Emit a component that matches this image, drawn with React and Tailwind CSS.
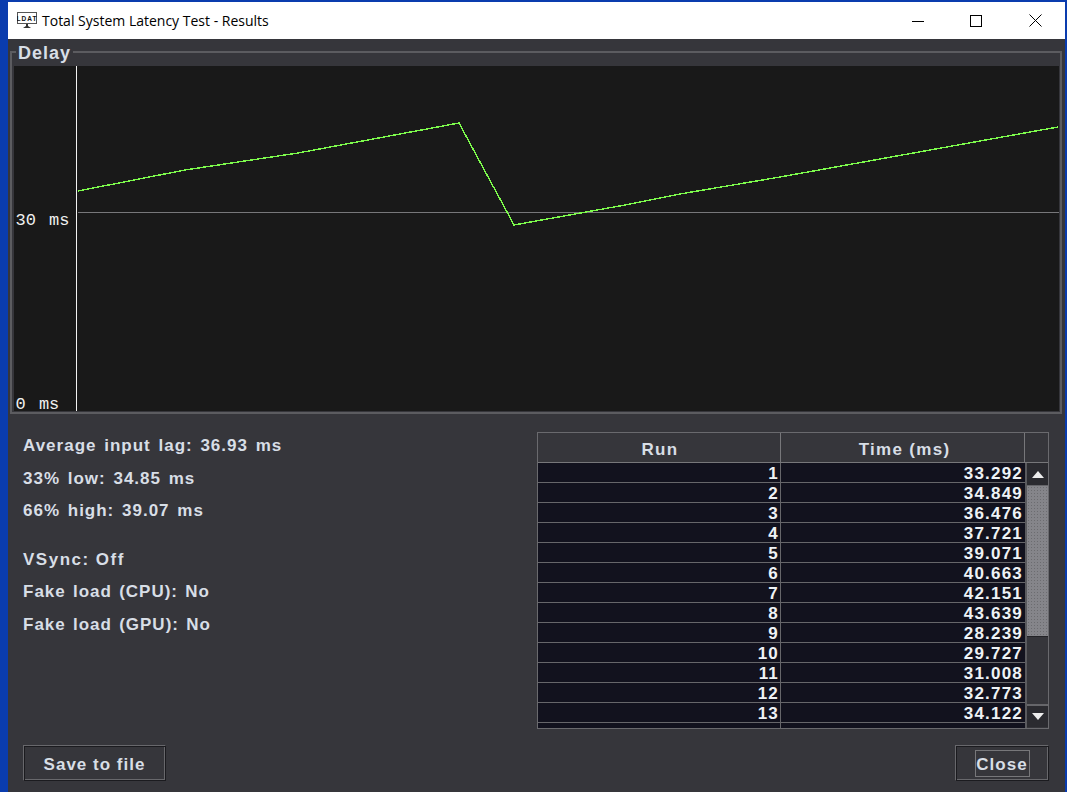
const rows = [
  [1, "33.292"],
  [2, "34.849"],
  [3, "36.476"],
  [4, "37.721"],
  [5, "39.071"],
  [6, "40.663"],
  [7, "42.151"],
  [8, "43.639"],
  [9, "28.239"],
  [10, "29.727"],
  [11, "31.008"],
  [12, "32.773"],
  [13, "34.122"],
];

const stats = ["Average input lag: 36.93 ms", "33% low: 34.85 ms", "66% high: 39.07 ms"];
const settings = [
  { text: "VSync: Off", cls: "tracking-[1.5px]" },
  { text: "Fake load (CPU): No", cls: "[word-spacing:1.5px]" },
  { text: "Fake load (GPU): No", cls: "[word-spacing:1.5px]" },
];

const bevel =
  "border border-t-[#68686c] border-l-[#68686c] border-r-[#1b1b1f] border-b-[#1b1b1f] shadow-[inset_1px_1px_0_#1b1b1f,inset_-1px_-1px_0_#68686c]";

function AppIcon() {
  return (
    <svg width="20" height="18" viewBox="0 0 20 18" className="shrink-0">
      <rect x="0.5" y="0.5" width="19" height="11" fill="#fff" stroke="#555" />
      <text x="10" y="8.5" textAnchor="middle" fontSize="6.5" fontWeight="700" fontFamily="Liberation Sans, sans-serif" fill="#111">
        LDAT
      </text>
      <path d="M9 12h2v2h-2zM6 16l3-2h2l3 2z" fill="#333" />
    </svg>
  );
}

function TitleBar() {
  return (
    <div className="flex h-[37px] items-center bg-white text-black">
      <div className="ml-[9px] mr-[5px] flex w-5">
        <AppIcon />
      </div>
      <span className="text-[14px] font-normal tracking-normal [font-family:'Open_Sans',sans-serif]">Total System Latency Test - Results</span>
      <div className="ml-auto flex h-full">
        <div className="flex w-[58px] items-center justify-center">
          <svg width="12" height="12" viewBox="0 0 12 12">
            <path d="M0 6.5h12" stroke="#000" />
          </svg>
        </div>
        <div className="flex w-[58px] items-center justify-center">
          <svg width="12" height="12" viewBox="0 0 12 12">
            <rect x="0.5" y="0.5" width="11" height="11" fill="none" stroke="#000" />
          </svg>
        </div>
        <div className="flex w-[60px] items-center justify-center">
          <svg width="13" height="13" viewBox="0 0 13 13">
            <path d="M0.5 0.5l12 12M12.5 0.5l-12 12" stroke="#000" />
          </svg>
        </div>
      </div>
    </div>
  );
}

function DelayChart() {
  const line = "64,125 171,104 284,87 445,57 500,159 611,139 666,128 766,111 1044,61";
  const label = { fontSize: 17, fontWeight: 400, letterSpacing: 0, wordSpacing: 3, fill: "#f0f0f0", fontFamily: "Liberation Mono, monospace" };
  return (
    <svg width="1045" height="345" viewBox="0 0 1045 345" className="block overflow-visible bg-[#191919]">
      <path d="M62.5 0v345" stroke="#f2f2f2" />
      <path d="M64 146.5h981" stroke="#77777a" />
      <polyline points={line} fill="none" stroke="#7dfb4c" strokeWidth="1.4" shapeRendering="crispEdges" />
      <text x="1.5" y="159" {...label}>30 ms</text>
      <text x="1.5" y="343" {...label}>0 ms</text>
    </svg>
  );
}

function ResultsTable() {
  return (
    <div className="flex h-[297px] w-[512px] flex-col overflow-hidden border border-[#6a6a6e]">
      <div className="flex h-[30px] shrink-0 border-b border-[#77777a] tracking-[1.3px] text-[#d8dee6]">
        <div className="flex w-[243px] items-center justify-center border-r border-[#77777a] pl-[2px] pt-[5px]">Run</div>
        <div className="flex w-[244px] items-center justify-center border-r border-[#77777a] pl-[4px] pt-[5px]">Time (ms)</div>
        <div className="flex-1" />
      </div>
      <div className="flex min-h-0 flex-1">
        <div className="w-[487px] overflow-hidden bg-[#12121e] tracking-[1.2px]">
          {rows.map(([run, time]) => (
            <div key={run} className="flex h-5 border-b border-[#66666a] leading-[22px] text-[#eef2f6]">
              <div className="w-[243px] border-r border-[#66666a] pr-[1px] text-right">{run}</div>
              <div className="w-[244px] pr-[2px] text-right">{time}</div>
            </div>
          ))}
          <div className="flex h-5">
            <div className="w-[243px] border-r border-[#66666a]" />
          </div>
        </div>
        <div className="flex flex-1 flex-col border-l-2 border-[#5a5a5e] pb-[1px]">
          <div className="flex h-[23px] shrink-0 items-center justify-center border-b border-[#66666a] bg-[#2b2b30]">
            <svg width="12" height="7" viewBox="0 0 12 7">
              <path d="M6 0l6 7H0z" fill="#eee" />
            </svg>
          </div>
          <div className="h-[150px] shrink-0 bg-[#85858a] bg-[radial-gradient(#6c6c70_1px,transparent_1px)] bg-[length:3px_3px]" />
          <div className="flex-1 border-t border-[#232327]" />
          <div className="flex h-[23px] shrink-0 items-center justify-center border-t-2 border-[#66666a] bg-[#2b2b30]">
            <svg width="12" height="7" viewBox="0 0 12 7">
              <path d="M0 0h12L6 7z" fill="#eee" />
            </svg>
          </div>
        </div>
      </div>
    </div>
  );
}

export default function App() {
  return (
    <div className="flex h-[792px] w-[1067px] overflow-hidden bg-[#0a3cae] pl-2 pr-[2px] pt-[2px] text-[17px] font-bold tracking-[1px] [font-family:'Liberation_Sans',sans-serif]">
      <div className="flex min-w-0 flex-1 flex-col">
        <TitleBar />
        <div className="flex min-h-0 flex-1 flex-col bg-[#36363b] text-[#d8dee6]">
          {/* group box with its legend sitting on the border */}
          <div className="relative ml-[2px] mr-[3px] mt-3 border-2 border-[#5c5c60] px-[2px] pb-[1px] pt-[13px]">
            <span className="absolute left-[4px] top-[-10px] bg-[#36363b] px-[2px] text-[18px] leading-5 tracking-[1px]">Delay</span>
            <DelayChart />
          </div>
          <div className="flex flex-1 items-start justify-between pl-[15px] pr-[16px] pt-[18px]">
            <div className="pt-[3px]">
              <div className="flex flex-col gap-[11px] leading-[21.5px]">
                {stats.map((s) => (
                  <div key={s} className="whitespace-pre [word-spacing:2px]">{s}</div>
                ))}
              </div>
              <div className="mt-[27px] flex flex-col gap-[11px] leading-[21.5px]">
                {settings.map((s) => (
                  <div key={s.text} className={`whitespace-pre ${s.cls}`}>{s.text}</div>
                ))}
              </div>
            </div>
            <ResultsTable />
          </div>
          <div className="flex items-start justify-between pb-[11px] pl-[15px] pr-[16px]">
            <div className={`flex h-[36px] w-[143px] items-center justify-center pt-[3px] ${bevel}`}>Save to file</div>
            <div className={`flex h-[36px] w-[94px] items-center justify-center ${bevel}`}>
              <span className="flex h-[27px] w-[55px] items-center justify-center border border-[#77777a] pt-[3px] text-[#d8dee6]">Close</span>
            </div>
          </div>
        </div>
      </div>
    </div>
  );
}
